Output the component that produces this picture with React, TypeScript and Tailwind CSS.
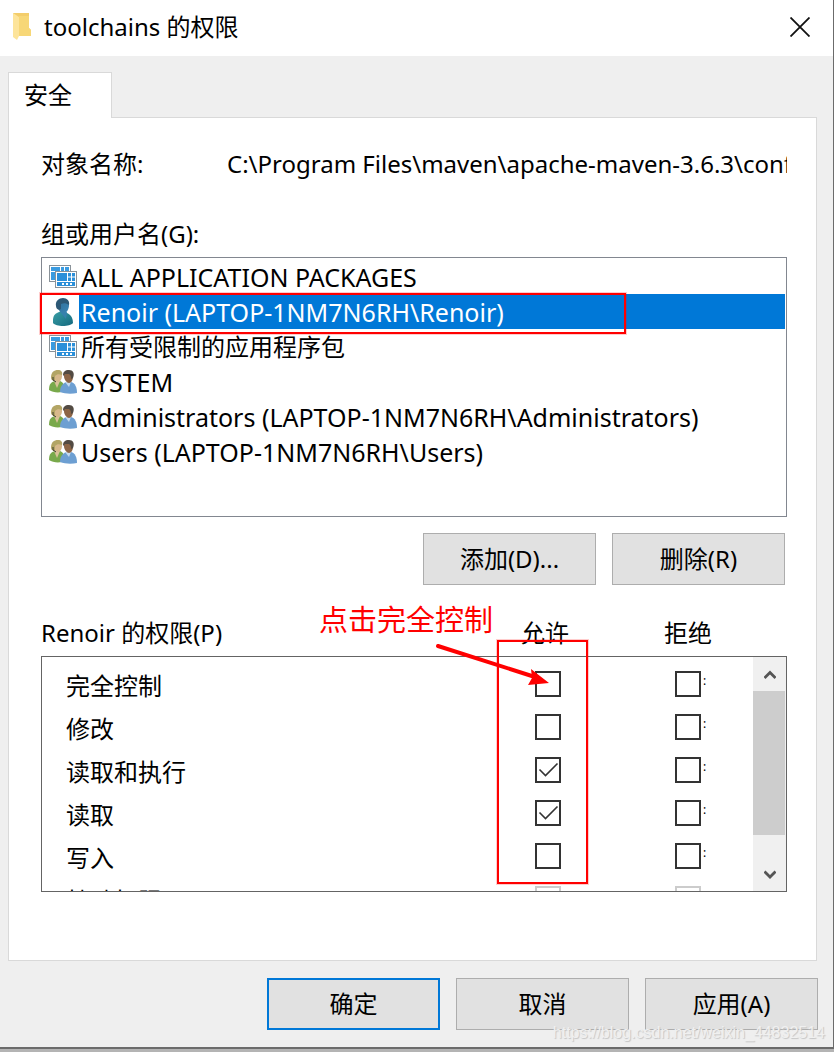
import React, { useState } from "react";

const AppPackageIcon: React.FC = () => (
    <svg className="h-6 w-7 shrink-0" viewBox="0 0 28 24" aria-hidden="true">
        <rect x="0.5" y="0.5" width="21" height="16" fill="#fff" stroke="#8a9299" />
        <rect x="2" y="2" width="18" height="13" fill="#3a9be0" />
        <path d="M11.500 2v4M15.500 2v4M2 6.500h18" stroke="#fff" />
        <rect x="6.500" y="6.500" width="21" height="16" fill="#fff" stroke="#8a9299" />
        <rect x="8" y="8" width="18" height="13" fill="#2b8fd9" />
        <path d="M18.500 8v8M22.500 8v8M18 12h8M8 16.500h18" stroke="#fff" />
        <path d="M13 19h2M17 19h2M21 19h2" stroke="#fff" strokeWidth="2" />
    </svg>
);

const UserIcon: React.FC = () => (
    <svg className="h-7 w-7 shrink-0" viewBox="0 0 28 28" aria-hidden="true">
        <defs>
            <linearGradient id="user-body" x1="0" y1="0" x2="1" y2="1">
                <stop offset="0" stopColor="#3a9fa5" />
                <stop offset="1" stopColor="#14697f" />
            </linearGradient>
            <linearGradient id="user-head" x1="0" y1="0" x2="1" y2="1">
                <stop offset="0" stopColor="#2d6c96" />
                <stop offset="1" stopColor="#3b86b5" />
            </linearGradient>
        </defs>
        <path d="M4 25c0-5 0-8 4-10l4-2h4c2 3 8 3 8 12-3 4-17 4-20 0z" fill="url(#user-body)" />
        <path d="M10 12l6-1 2 4-1 6-5-6z" fill="#3681ac" />
        <path d="M8 7c0-4 3-6 6-6 4 0 6 3 6 6 0 5-3 8-5 8s-6-3-7-8z" fill="url(#user-head)" />
        <path d="M7 8c-1-5 3-8 7-8s7 3 6 7c-3-2-5-2-8-1v5l-2 1c-2-1-3-2-3-4z" fill="#2c5875" />
    </svg>
);

const GroupIcon: React.FC = () => (
    <svg className="h-6 w-7 shrink-0" viewBox="0 0 28 24" aria-hidden="true">
        <path d="M0 20c0-6 2-8 6-9h5c3 1 5 4 5 10-4 2-12 2-16-1z" fill="#79a94b" />
        <path d="M5 11l3 7 3-7-3-2z" fill="#d9c197" />
        <path d="M4 6c0-3 2-5 5-5s4 2 4 5-2 6-4 6-5-3-5-6z" fill="#d7b88b" />
        <path d="M2 8c0-6 3-8 7-8 3 0 5 2 4 5-3-1-5-1-7 1v5c-2 0-4-1-4-3z" fill="#b3a565" />
        <path d="M4 7v3l3 2" fill="none" stroke="#3b3a2c" strokeWidth="1" />
        <path d="M11 22c0-5 2-8 6-10h5c4 1 6 5 6 11-5 1-12 1-17-1z" fill="#6d9fd2" />
        <path d="M16 12h6l-2 5z" fill="#c4d9ee" />
        <path d="M15 6c0-3 2-5 5-5s4 3 4 6-2 6-4 6-5-3-5-7z" fill="#8d6546" />
        <path d="M14 5c0-3 2-5 6-5s6 3 4 8l-2 1c0-2 0-4-2-5h-4l-1 2z" fill="#534b43" />
    </svg>
);

const icons = { app: AppPackageIcon, user: UserIcon, group: GroupIcon };

interface Principal {
    name: string;
    icon: keyof typeof icons;
    localized?: boolean;
}

const principals: Principal[] = [
    { name: "ALL APPLICATION PACKAGES", icon: "app" },
    { name: "Renoir (LAPTOP-1NM7N6RH\\Renoir)", icon: "user" },
    { name: "所有受限制的应用程序包", icon: "app", localized: true },
    { name: "SYSTEM", icon: "group" },
    { name: "Administrators (LAPTOP-1NM7N6RH\\Administrators)", icon: "group" },
    { name: "Users (LAPTOP-1NM7N6RH\\Users)", icon: "group" },
];

const permissions = [
    { name: "完全控制", allow: false },
    { name: "修改", allow: false },
    { name: "读取和执行", allow: true },
    { name: "读取", allow: true },
    { name: "写入", allow: false },
    { name: "特殊权限", allow: false, disabled: true },
];

interface CheckProps {
    label: string;
    defaultChecked?: boolean;
    disabled?: boolean;
}

const Check: React.FC<CheckProps> = ({ label, defaultChecked, disabled }) => (
    <span className="relative block size-[26px]">
        <input
            type="checkbox"
            aria-label={label}
            defaultChecked={defaultChecked}
            disabled={disabled}
            className="peer block size-[26px] appearance-none border-2 border-[#333] bg-white disabled:border-[#ccc]"
        />
        <svg
            className="pointer-events-none invisible absolute inset-0 size-[26px] peer-checked:visible"
            viewBox="0 0 26 26"
            fill="none"
            stroke="#333"
            strokeWidth="1.6"
            aria-hidden="true"
        >
            <path d="M4.5 12.5l6 6L22.500 6.500" />
        </svg>
    </span>
);

interface DialogButtonProps {
    label: string;
    primary?: boolean;
}

const DialogButton: React.FC<DialogButtonProps> = ({ label, primary }) => (
    <button
        type="button"
        className={`h-[52px] w-[173px] bg-[#e1e1e1] ${primary ? "border-2 border-[#0078d7]" : "border border-[#adadad]"}`}
    >
        {label}
    </button>
);

const App: React.FC = () => {
    const [selected, setSelected] = useState(1);

    return (
        <div className="flex min-h-screen flex-col bg-[#b4b4b4] font-['Noto_Sans','Noto_Sans_CJK_SC',sans-serif] text-2xl leading-8 text-black">
            <main className="relative flex flex-1 flex-col border-r border-b-2 border-[#6b6b6b] bg-[#efefef]">
                <header className="flex h-14 items-center bg-white pb-[2px] pl-3 pr-[19px]">
                    <svg className="h-7 w-5" viewBox="0 0 20 28" aria-hidden="true">
                        <path d="M1 0h16v15l2 2v6H6z" fill="#f3cd6b" />
                        <path d="M1 0l6 4v19l-2 4-4-3z" fill="#fde49a" />
                        <path d="M7 3h10v12l2 2v6H7z" fill="#f7d777" />
                    </svg>
                    <h1 className="ml-3 flex-1">toolchains 的权限</h1>
                    <button type="button" aria-label="关闭" className="p-1">
                        <svg className="size-5" viewBox="0 0 20 20" stroke="#111" strokeWidth="1.8" aria-hidden="true">
                            <path d="M.5 .5l19 19M19.500 .5l-19 19" />
                        </svg>
                    </button>
                </header>

                <div className="flex flex-1 flex-col px-2 pt-4">
                    <div role="tablist" className="relative z-10 flex">
                        <button
                            type="button"
                            role="tab"
                            aria-selected="true"
                            className="-mb-px h-[46px] w-[104px] border border-b-0 border-[#d9d9d9] bg-white pr-6 pb-[2px]"
                        >
                            安全
                        </button>
                    </div>

                    <section className="mr-2 flex flex-1 flex-col border border-[#d9d9d9] bg-white pt-[30px] pr-[29px] pl-8">
                        <div className="flex overflow-hidden whitespace-nowrap">
                            <span className="w-[186px] shrink-0">对象名称:</span>
                            <span className="min-w-0 flex-1 overflow-hidden">
                                C:\Program Files\maven\apache-maven-3.6.3\conf
                            </span>
                        </div>

                        <h2 id="principals" className="mt-[38px]">组或用户名(G):</h2>
                        <div className="relative mt-[7px]">
                            <ul
                                role="listbox"
                                aria-labelledby="principals"
                                className="h-[260px] border border-[#828790] p-px"
                            >
                                {principals.map((item, index) => {
                                    const Icon = icons[item.icon];
                                    return (
                                        <li
                                            key={item.name}
                                            role="option"
                                            aria-selected={index === selected}
                                            onClick={() => setSelected(index)}
                                            className="flex h-[35px] items-center pl-[6px]"
                                        >
                                            <Icon />
                                            <span
                                                className={`ml-[2px] flex h-full flex-1 items-center pl-[2px] whitespace-nowrap ${
                                                    item.localized ? "text-2xl" : "text-[25px]"
                                                } ${index === selected ? "bg-[#0078d7] text-white" : ""}`}
                                            >
                                                {item.name}
                                            </span>
                                        </li>
                                    );
                                })}
                            </ul>
                            <div className="pointer-events-none absolute top-9 -left-px h-[41px] w-[586px] border-2 border-[#f00] shadow-[0_0_0_1px_rgba(255,0,0,0.2)]" />
                        </div>

                        <div className="mt-4 mr-[2px] flex justify-end gap-4">
                            <DialogButton label="添加(D)..." />
                            <DialogButton label="删除(R)" />
                        </div>

                        <div className="mt-8 flex">
                            <h2 id="permissions" className="flex-1">Renoir 的权限(P)</h2>
                            <span className="w-[143px]">允许</span>
                            <span className="w-[123px]">拒绝</span>
                        </div>
                        <div className="relative mt-[7px]">
                            <div className="flex h-[236px] overflow-hidden border border-[#646464]">
                                <div className="flex-1 overflow-hidden pt-[5px]">
                                    <table aria-labelledby="permissions" className="w-full">
                                        <tbody>
                                            {permissions.map((item) => (
                                                <tr key={item.name} className="h-[43px]">
                                                    <th scope="row" className="p-0 pt-1 pl-6 text-left font-normal">
                                                        {item.name}
                                                    </th>
                                                    <td className="w-[140px] p-0">
                                                        <Check
                                                            label={`允许 ${item.name}`}
                                                            defaultChecked={item.allow}
                                                            disabled={item.disabled}
                                                        />
                                                    </td>
                                                    <td className="w-[78px] p-0">
                                                        <div className="flex gap-[2px]">
                                                            <Check label={`拒绝 ${item.name}`} disabled={item.disabled} />
                                                            {!item.disabled && <span className="text-xs leading-5">:</span>}
                                                        </div>
                                                    </td>
                                                </tr>
                                            ))}
                                        </tbody>
                                    </table>
                                </div>
                                <div className="flex w-[33px] flex-col bg-[#f0f0f0]">
                                    <button type="button" aria-label="向上滚动" className="flex h-[34px] items-center justify-center">
                                        <svg className="h-3 w-3" viewBox="0 0 12 12" fill="none" stroke="#555" strokeWidth="2.8" aria-hidden="true">
                                            <path d="M.5 10l5.500-5.500L11.500 10" />
                                        </svg>
                                    </button>
                                    <div className="mr-px h-36 bg-[#cdcdcd]" />
                                    <div className="flex-1" />
                                    <button type="button" aria-label="向下滚动" className="flex h-[34px] items-center justify-center">
                                        <svg className="h-3 w-3" viewBox="0 0 12 12" fill="none" stroke="#555" strokeWidth="2.8" aria-hidden="true">
                                            <path d="M.5 3.500L6 9l5.500-5.500" />
                                        </svg>
                                    </button>
                                </div>
                            </div>

                            {/* callout */}
                            <div className="pointer-events-none absolute -top-4 right-[199px] h-[244px] w-[91px] border-2 border-[#f00] shadow-[0_0_0_1px_rgba(255,0,0,0.2)]" />
                            <p className="pointer-events-none absolute -top-14 right-[294px] text-[29px] leading-10 text-[#f00]">
                                点击完全控制
                            </p>
                            <svg
                                className="pointer-events-none absolute -top-4 right-[232px] h-12 w-[124px]"
                                viewBox="0 0 124 48"
                                aria-hidden="true"
                            >
                                <path d="M7 6l97 31" stroke="#f00" strokeWidth="4" strokeLinecap="round" />
                                <path d="M118 43l-21 2 4-7-1-9z" fill="#f00" />
                            </svg>
                        </div>
                    </section>

                    <footer className="mr-[7px] flex justify-end gap-4 py-[17px]">
                        <DialogButton label="确定" primary />
                        <DialogButton label="取消" />
                        <DialogButton label="应用(A)" />
                    </footer>
                </div>

                <p className="pointer-events-none absolute right-2 bottom-1 font-['Liberation_Sans',sans-serif] text-base leading-5 text-[#f0f0f0] [text-shadow:1px_1px_1px_#c4c4c4]">
                    https://blog.csdn.net/weixin_44832514
                </p>
            </main>
            <div className="h-[3px] shrink-0" />
        </div>
    );
};

export default App;
